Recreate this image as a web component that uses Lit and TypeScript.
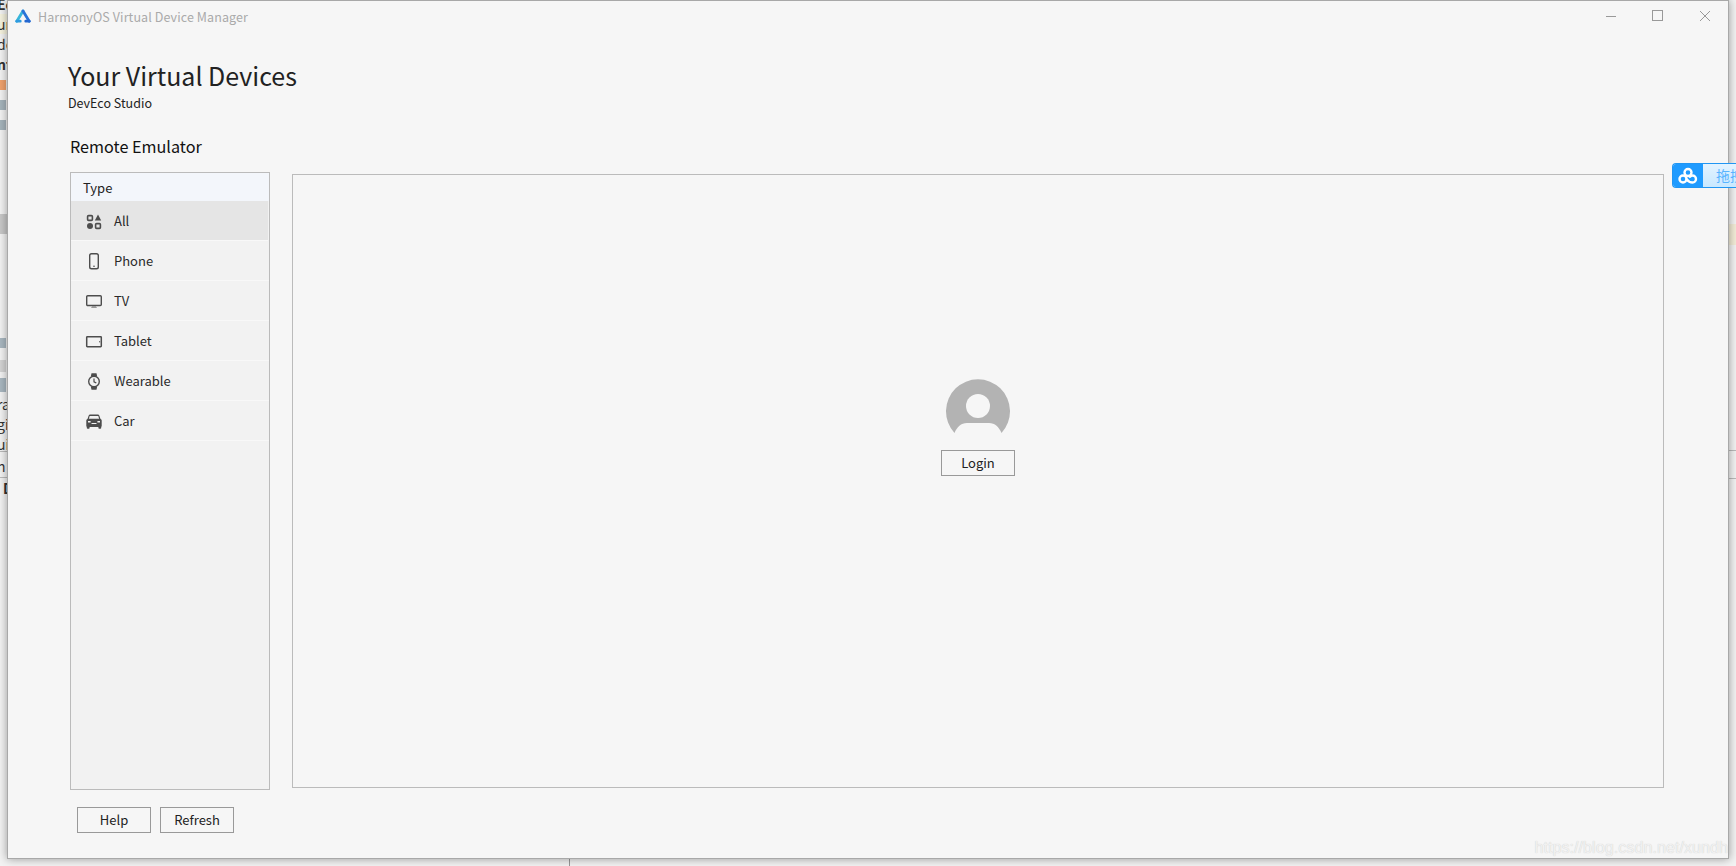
import { LitElement, html, css, svg } from "lit";
import { customElement } from "lit/decorators.js";

const ICONS: Record<string, unknown> = {
  All: svg`<rect x="3.6" y="4.600" width="4.800" height="4.800" rx="1" fill="none" stroke="#4d4d4d" stroke-width="1.600"/><path d="M14 3.600l3.200 5.800h-6.400z" fill="#4d4d4d"/><circle cx="6" cy="15" r="3" fill="#4d4d4d"/><rect x="11.600" y="12.600" width="4.800" height="4.800" rx="1" fill="none" stroke="#4d4d4d" stroke-width="1.600"/>`,
  Phone: svg`<rect x="5.700" y="2.700" width="8.600" height="15" rx="1.800" fill="none" stroke="#4d4d4d" stroke-width="1.400"/><rect x="9" y="14.600" width="2" height="1.400" fill="#888"/>`,
  TV: svg`<rect x="2.700" y="4.700" width="14.600" height="9.800" rx="1" fill="none" stroke="#4d4d4d" stroke-width="1.400"/><path d="M7 17h6l-1.200-2h-3.600z" fill="#999"/>`,
  Tablet: svg`<rect x="2.700" y="5.700" width="14.600" height="10" rx=".6" fill="none" stroke="#4d4d4d" stroke-width="1.500"/><rect x="15" y="10" width="1.200" height="1.400" fill="#777"/>`,
  Wearable: svg`<circle cx="10" cy="10.500" r="5.300" fill="none" stroke="#4d4d4d" stroke-width="1.400"/><path d="M6.800 5.600l.7-3.400h5l.7 3.400zM6.800 15.400l.7 3.400h5l.7-3.400z" fill="#4d4d4d"/><path d="M10 7.500v3.300l2.300 1.300" fill="none" stroke="#4d4d4d" stroke-width="1.200"/>`,
  Car: svg`<path d="M4.600 4.800c.3-.8.8-1.200 1.600-1.200h7.600c.8 0 1.300.4 1.600 1.200l1 3 .9.700c.3.300.4.600.4 1v5.800c0 .3-.2.500-.5.500v1.100c0 .5-.3.800-.8.800h-1.200c-.5 0-.8-.3-.8-.8v-1H5.600v1c0 .5-.3.800-.8.800H3.600c-.5 0-.8-.3-.8-.8v-1.100c-.3 0-.5-.2-.5-.5V9.500c0-.4.100-.7.400-1l.9-.7z" fill="#4d4d4d"/><path d="M5.700 5h8.600l.8 2.700H4.900z" fill="#f2f2f2"/><rect x="4" y="10" width="2.600" height="1.500" fill="#f2f2f2"/><rect x="13.400" y="10" width="2.600" height="1.500" fill="#f2f2f2"/><rect x="7.500" y="12" width="5" height="1" fill="#f2f2f2"/>`,
};

const TYPES = ["All", "Phone", "TV", "Tablet", "Wearable", "Car"];

@customElement("app-root")
export class AppRoot extends LitElement {
  static styles = css`
    :host {
      display: block;
      position: relative;
      width: 1736px;
      height: 866px;
      overflow: hidden;
      background: #f3f3f3;
      font-family: "Noto Sans CJK SC", "Noto Sans", sans-serif;
      color: #222;
    }
    .frag {
      position: absolute;
      left: -3px;
      font-size: 14px;
      line-height: 20px;
      white-space: nowrap;
      color: #333;
    }
    .chip {
      position: absolute;
      left: 0;
      width: 6px;
      height: 10px;
    }
    .strip {
      position: absolute;
      left: 0;
      width: 8px;
      background: #c8c8c8;
    }
    .hline {
      position: absolute;
      left: 0;
      width: 8px;
      height: 1px;
      background: #bbb;
    }
    .hline.r {
      left: auto;
      right: 0;
    }
    .patch {
      position: absolute;
      right: 0;
      top: 224px;
      width: 8px;
      height: 21px;
      background: #f3edd8;
    }
    .vline {
      position: absolute;
      left: 569px;
      top: 858px;
      width: 1px;
      height: 8px;
      background: #999;
    }
    .window {
      position: absolute;
      left: 7px;
      top: 0;
      width: 1722px;
      height: 859px;
      box-sizing: border-box;
      background: #f6f6f6;
      border: 1px solid #a8a8a8;
      box-shadow: 0 0 9px rgba(0, 0, 0, 0.38);
      display: flex;
      flex-direction: column;
    }
    .titlebar {
      height: 30px;
      flex: none;
      display: flex;
      align-items: center;
      padding: 0 0 0 7px;
      color: #aaa;
      font-size: 12.5px;
      letter-spacing: 0.1px;
    }
    .titlebar .logo {
      width: 16px;
      height: 16px;
      margin-right: 7px;
    }
    .titlebar .spacer {
      flex: 1;
    }
    .ctl {
      width: 47px;
      height: 30px;
      display: flex;
      align-items: center;
      justify-content: center;
    }
    .content {
      flex: 1;
      min-height: 0;
      display: flex;
      flex-direction: column;
      padding: 26px 0 0 60px;
    }
    h1 {
      margin: 0;
      font-size: 25px;
      font-weight: 400;
      line-height: 36px;
      color: #222;
    }
    .sub {
      font-size: 12.5px;
      line-height: 18px;
      margin-top: 1px;
    }
    .section {
      font-size: 16.2px;
      line-height: 22px;
      margin: 23px 0 0 2px;
      color: #111;
    }
    .panes {
      display: flex;
      align-items: flex-start;
      margin: 15px 0 0 2px;
      gap: 22px;
    }
    .side {
      width: 200px;
      height: 618px;
      box-sizing: border-box;
      border: 1px solid #bbb;
      background: #f2f2f2;
      display: flex;
      flex-direction: column;
    }
    .side .head {
      height: 28px;
      flex: none;
      box-sizing: border-box;
      padding-left: 12px;
      background: #f3f6fb;
      display: flex;
      align-items: center;
      font-size: 13px;
    }
    .row {
      height: 40px;
      flex: none;
      box-sizing: border-box;
      display: flex;
      align-items: center;
      padding-left: 13px;
      gap: 10px;
      font-size: 13px;
      color: #2a2a2a;
      border-bottom: 1px solid #f8f8f8;
    }
    .row.sel {
      background: #e5e5e5;
      margin-right: 1px;
    }
    .row svg {
      width: 20px;
      height: 20px;
      flex: none;
    }
    .main {
      width: 1372px;
      height: 614px;
      margin-top: 2px;
      box-sizing: border-box;
      border: 1px solid #bbb;
      display: flex;
      flex-direction: column;
      align-items: center;
      justify-content: center;
      gap: 16px;
      padding-bottom: 108px;
    }
    .avatar {
      width: 66px;
      height: 55px;
      display: block;
    }
    button {
      box-sizing: border-box;
      width: 74px;
      height: 26px;
      padding: 0;
      background: transparent;
      border: 1px solid #999;
      border-radius: 0;
      font: inherit;
      font-size: 13px;
      line-height: 22px;
      color: #222;
    }
    .foot {
      display: flex;
      gap: 9px;
      margin: 17px 0 0 9px;
    }
    .mark {
      position: absolute;
      right: 0;
      bottom: 0;
      font-family: "Liberation Sans", sans-serif;
      font-size: 16.2px;
      line-height: 22px;
      color: #f1f1f1;
      text-shadow: 0 0 1px #c8c8c8;
    }
    .pan {
      position: absolute;
      left: 1672px;
      top: 163px;
      width: 64px;
      height: 25px;
      display: flex;
      box-sizing: border-box;
      border: 1px solid #2196f3;
      border-right: 0;
      border-radius: 4px 0 0 4px;
      overflow: hidden;
      background: linear-gradient(#e3f3ff, #c8e8ff);
    }
    .pan .ic {
      width: 30px;
      background: #1f9bff;
      display: flex;
      align-items: center;
      justify-content: center;
      flex: none;
    }
    .pan .txt {
      font-size: 14px;
      line-height: 23px;
      color: #59b4ff;
      padding-left: 13px;
      white-space: nowrap;
    }
  `;

  render() {
    return html`
      <div class="frag" style="top:-6px;font-weight:700">Ec</div>
      <div class="frag" style="top:14px;background:#f6f3df;width:11px">ur</div>
      <div class="frag" style="top:34px">de</div>
      <div class="frag" style="top:54px;font-weight:700">nt</div>
      <div class="chip" style="top:80px;background:#f0a36e"></div>
      <div class="chip" style="top:100px;background:#a6b4bc"></div>
      <div class="chip" style="top:120px;background:#a6b4bc"></div>
      <div class="strip" style="top:214px;height:20px"></div>
      <div class="chip" style="top:338px;background:#a9b7c0"></div>
      <div class="chip" style="top:360px;height:12px;background:#d4d4d4"></div>
      <div class="chip" style="top:378px;height:14px;background:#a9b7c0"></div>
      <div class="frag" style="top:394px">ra</div>
      <div class="frag" style="top:414px">git</div>
      <div class="frag" style="top:434px">ui</div>
      <div class="hline" style="top:451px"></div>
      <div class="frag" style="top:456px">n</div>
      <div class="hline" style="top:477px"></div>
      <div class="frag" style="top:478px;left:3px;font-weight:700">D</div>
      <div class="patch"></div>
      <div class="hline r" style="top:450px"></div>
      <div class="hline r" style="top:478px"></div>
      <div class="vline"></div>

      <div class="window">
        <div class="titlebar">
          <svg class="logo" viewBox="0 0 16 16">
            <path d="M8 3L1.800 13.200" fill="none" stroke="#38b6da" stroke-width="2.800" stroke-linecap="round"/>
            <path d="M8 3l6.200 10.200" fill="none" stroke="#2a73d8" stroke-width="2.800" stroke-linecap="round"/>
            <path d="M1.800 13.200H5.500" fill="none" stroke="#2f9be0" stroke-width="2.800" stroke-linecap="round"/>
            <path d="M10.500 13.200h3.700" fill="none" stroke="#2468d0" stroke-width="2.800" stroke-linecap="round"/>
            <path d="M8 7.500l3 3.700H9.400v4H6.600v-4H5z" fill="#f6f6f6"/>
          </svg>
          <span>HarmonyOS Virtual Device Manager</span>
          <span class="spacer"></span>
          <div class="ctl">
            <svg width="12" height="12" viewBox="0 0 12 12"><path d="M1 6.500h10" stroke="#999" stroke-width="1"/></svg>
          </div>
          <div class="ctl">
            <svg width="12" height="12" viewBox="0 0 12 12"><rect x=".5" y=".5" width="10" height="10" fill="none" stroke="#999"/></svg>
          </div>
          <div class="ctl">
            <svg width="12" height="12" viewBox="0 0 12 12"><path d="M1 1l10 10M11 1L1 11" stroke="#999" stroke-width="1"/></svg>
          </div>
        </div>
        <div class="content">
          <h1>Your Virtual Devices</h1>
          <div class="sub">DevEco Studio</div>
          <div class="section">Remote Emulator</div>
          <div class="panes">
            <div class="side">
              <div class="head">Type</div>
              ${TYPES.map(
                (t, i) => html`
                  <div class="row ${i === 0 ? "sel" : ""}">
                    <svg viewBox="0 0 20 20">${ICONS[t]}</svg>
                    <span>${t}</span>
                  </div>
                `
              )}
            </div>
            <div class="main">
              <svg class="avatar" viewBox="0 0 66 55">
                <path d="M9.500 54A32 32 0 1 1 56.500 54C54 48 50 44 44 44H22C16 44 12 48 9.500 54Z" fill="#b3b3b3"/>
                <circle cx="33" cy="27" r="12" fill="#f6f6f6"/>
              </svg>
              <button>Login</button>
            </div>
          </div>
          <div class="foot">
            <button>Help</button>
            <button>Refresh</button>
          </div>
        </div>
        <div class="mark">https://blog.csdn.net/xundh</div>
      </div>

      <div class="pan">
        <div class="ic">
          <svg width="20" height="18" viewBox="0 0 20 18">
            <circle cx="10" cy="5.500" r="3.500" fill="none" stroke="#fff" stroke-width="2.400"/>
            <circle cx="5" cy="12" r="3.500" fill="none" stroke="#fff" stroke-width="2.400"/>
            <path d="M8.500 12c1.500 2 2.500 3.500 6 3.500a3.500 3.500 0 0 0 0-7c-1.500 0-2.500.8-3.500 2" fill="none" stroke="#fff" stroke-width="2.400"/>
          </svg>
        </div>
        <div class="txt">拖拽</div>
      </div>
    `;
  }
}
